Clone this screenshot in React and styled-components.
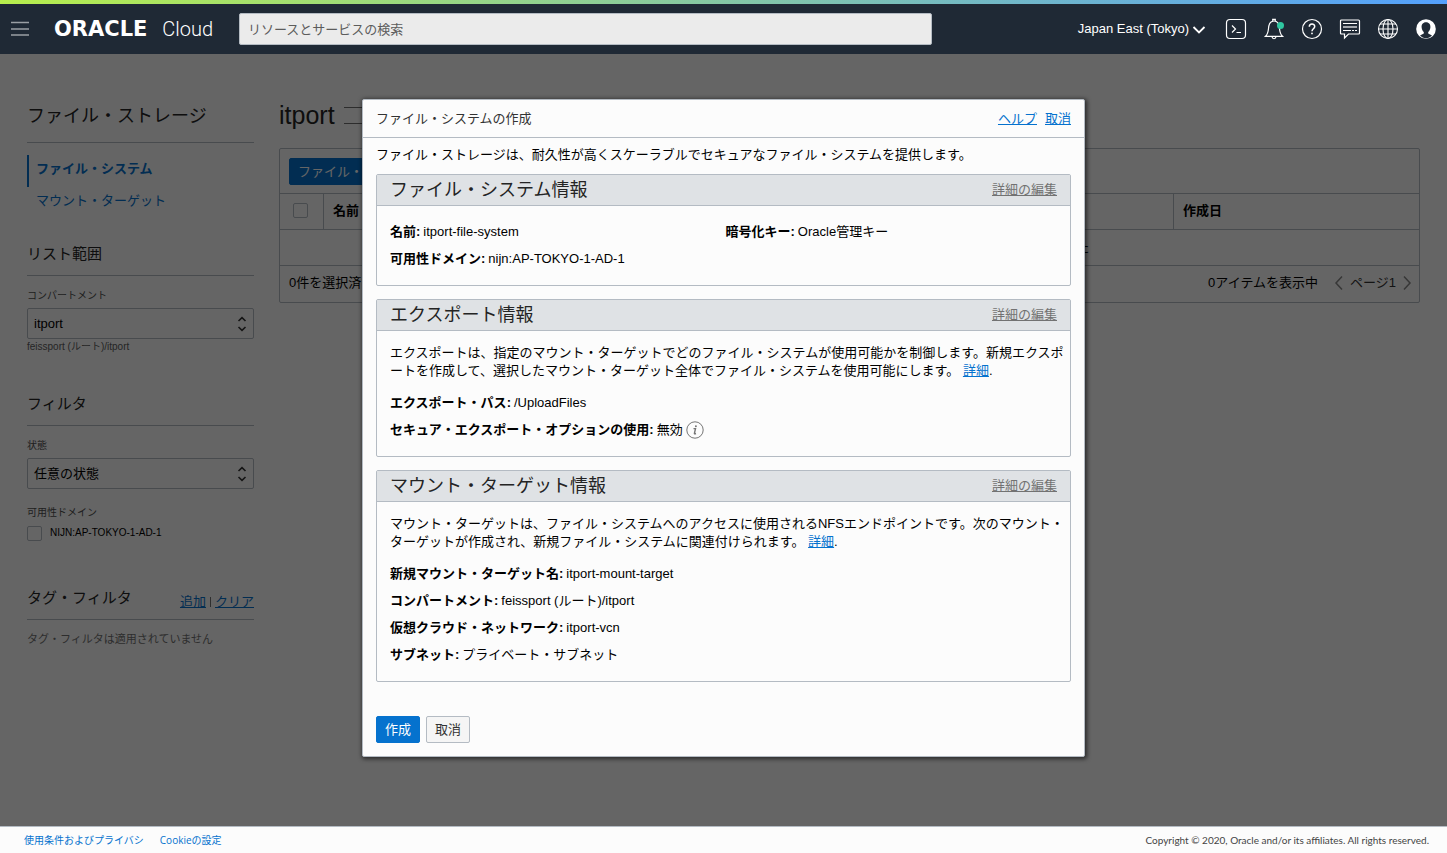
import React from 'react';
import styled, { createGlobalStyle, ThemeProvider } from 'styled-components';

const theme = {
  colors: {
    header: '#1f2935',
    page: '#fcfcfc',
    line: '#b4bbc3',
    link: '#0572ce',
    text: '#000000',
    heading: '#242424',
    muted: '#727272',
  },
};

const GlobalStyle = createGlobalStyle`
  *, *::before, *::after { box-sizing: border-box; }
  body {
    margin: 0;
    background: #fcfcfc;
    color: #000;
    font-family: "Liberation Sans", "Noto Sans CJK JP", sans-serif;
    font-size: 13px;
    line-height: 18px;
  }
  h1, h2, h3, p, dl, dd { margin: 0; }
  button, input, select { font: inherit; color: inherit; }
`;

const Page = styled.div`
  display: flex;
  flex-direction: column;
  min-height: 100vh;
`;

/* header */
const Rainbow = styled.div`
  height: 4px;
  background: linear-gradient(90deg, #b7ee4d, #53a0fd);
`;
const Header = styled.header`
  display: flex;
  align-items: center;
  height: 50px;
  padding: 0 10px;
  background: ${props => props.theme.colors.header};
  color: #fff;
`;
const IconButton = styled.button`
  display: flex;
  flex: none;
  padding: 0;
  border: 0;
  background: none;
  color: inherit;
`;
const Logo = styled.a`
  display: flex;
  align-items: center;
  justify-content: space-between;
  width: 159px;
  margin: 0 26px 0 24px;
  color: #fff;
  text-decoration: none;
  white-space: nowrap;
`;
const Oracle = styled.span`
  font: bold 21px/24px "DejaVu Sans", sans-serif;
`;
const Cloud = styled.span`
  font: 300 20px/24px Roboto, sans-serif;
`;
const Search = styled.input`
  flex: 0 1 693px;
  min-width: 100px;
  height: 32px;
  padding: 0 8px;
  border: 1px solid #b4bbc3;
  border-radius: 2px;
  background: #ebebeb;
  &::placeholder { color: #5c5c5c; opacity: 1; }
`;
const Tools = styled.div`
  display: flex;
  align-items: center;
  gap: 16px;
  margin-left: auto;
`;
const Region = styled(IconButton)`
  align-items: center;
  gap: 3px;
  margin-right: 3px;
  white-space: nowrap;
`;

/* page body behind the dialog */
const Body = styled.div`
  position: relative;
  flex: 1;
  display: flex;
  gap: 25px;
  padding: 48px 27px 40px;
`;
const Sidebar = styled.aside`
  flex: none;
  width: 227px;
`;
const SideTitle = styled.h2`
  height: 41px;
  padding-top: 2px;
  border-bottom: 1px solid ${props => props.theme.colors.line};
  color: ${props => props.theme.colors.heading};
  font-size: 18px;
  font-weight: normal;
  line-height: 24px;
`;
const SideNav = styled.nav`
  display: flex;
  flex-direction: column;
  margin-top: 12px;
`;
const SideLink = styled.a`
  height: 32px;
  padding-left: 7px;
  border-left: 2px solid ${props => (props.$active ? props.theme.colors.link : 'transparent')};
  color: ${props => props.theme.colors.link};
  font-weight: ${props => (props.$active ? 'bold' : 'normal')};
  line-height: 28px;
  text-decoration: none;
`;
const SectionHead = styled.div`
  display: flex;
  align-items: center;
  justify-content: space-between;
  height: 43px;
  margin-top: ${props => props.$top}px;
  border-bottom: 1px solid ${props => props.theme.colors.line};
`;
const SectionTitle = styled.h3`
  color: ${props => props.theme.colors.heading};
  font-size: 15px;
  font-weight: normal;
`;
const SectionLinks = styled.div`
  display: flex;
  gap: 4px;
  padding-top: 8px;
`;
const Divider = styled.span`
  width: 1px;
  height: 10px;
  margin-top: 4px;
  background: #777;
`;
const Link = styled.a`
  color: ${props => (props.$muted ? props.theme.colors.muted : props.theme.colors.link)};
  text-decoration: underline;
`;
const Label = styled.label`
  display: block;
  margin-top: 12px;
  color: #4f4f4f;
  font-size: 10px;
  line-height: 16px;
`;
const SelectBox = styled.div`
  position: relative;
  margin-top: 4px;
  svg { position: absolute; right: 6px; top: 8px; pointer-events: none; }
`;
const Select = styled.select`
  display: block;
  width: 100%;
  height: 31px;
  padding: 0 6px;
  appearance: none;
  border: 1px solid ${props => props.theme.colors.line};
  border-radius: 2px;
  background: transparent;
`;
const Hint = styled.p`
  color: #5c5c5c;
  font-size: 10px;
  line-height: 16px;
`;
const CheckGroup = styled.fieldset`
  margin: 16px 0 0;
  padding: 0;
  border: 0;
`;
const Legend = styled.legend`
  padding: 0;
  color: #4f4f4f;
  font-size: 10px;
  line-height: 16px;
`;
const CheckRow = styled.label`
  display: flex;
  align-items: center;
  gap: 8px;
  margin-top: 3px;
  font-size: 10px;
`;
const Checkbox = styled.input.attrs({ type: 'checkbox' })`
  display: block;
  flex: none;
  width: 15px;
  height: 15px;
  margin: 0;
  appearance: none;
  border: 1px solid ${props => props.theme.colors.line};
  border-radius: 2px;
`;
const Empty = styled.p`
  margin-top: 10px;
  color: ${props => props.theme.colors.muted};
  font-size: 11px;
`;

const Content = styled.main`
  flex: 1;
  min-width: 0;
`;
const TitleRow = styled.div`
  display: flex;
  align-items: center;
  gap: 9px;
  height: 26px;
`;
const PageTitle = styled.h1`
  color: ${props => props.theme.colors.heading};
  font-size: 25px;
  font-weight: normal;
`;
const Tag = styled.span`
  width: 96px;
  height: 17px;
  border: solid ${props => props.theme.colors.muted};
  border-width: 1px 0;
`;
const Panel = styled.section`
  margin-top: 20px;
  border: 1px solid ${props => props.theme.colors.line};
  border-radius: 2px;
`;
const Toolbar = styled.div`
  padding: 9px 9px 8px;
`;
const Button = styled.button`
  height: 27px;
  padding: 0 8px;
  border: 1px solid ${props => (props.$primary ? props.theme.colors.link : props.theme.colors.line)};
  border-radius: 2px;
  background: ${props => (props.$primary ? props.theme.colors.link : '#f5f5f5')};
  color: ${props => (props.$primary ? '#fff' : '#333')};
  line-height: 23px;
`;
const Table = styled.table`
  width: 100%;
  border-collapse: separate;
  border-spacing: 0;
  table-layout: fixed;
  th, td {
    height: 36px;
    padding: 0 9px;
    border-top: 1px solid ${props => props.theme.colors.line};
  }
  th { text-align: left; padding-bottom: 2px; }
  th + th { border-left: 1px solid ${props => props.theme.colors.line}; }
  th:first-child { padding-left: 13px; }
  td { text-align: center; white-space: nowrap; }
`;
const Th = styled.th`
  width: ${props => (props.$width ? `${props.$width}px` : 'auto')};
`;
const PanelFoot = styled.div`
  display: flex;
  align-items: center;
  justify-content: space-between;
  height: 37px;
  padding: 0 7px 2px 9px;
  border-top: 1px solid ${props => props.theme.colors.line};
`;
const Pager = styled.div`
  display: flex;
  align-items: center;
  gap: 7px;
  color: #333;
`;
const Count = styled.span`
  margin-right: 9px;
  color: #000;
`;

/* dialog */
const Overlay = styled.div`
  position: absolute;
  inset: 0;
  padding-top: 45px;
  background: rgba(0, 0, 0, 0.6);
`;
const Dialog = styled.div`
  width: 723px;
  max-width: 94%;
  margin: 0 auto;
  padding-bottom: 13px;
  border: 1px solid ${props => props.theme.colors.line};
  border-radius: 2px;
  background: #fcfcfc;
  box-shadow: 1px 1px 4px 1px rgba(0, 0, 0, 0.6);
`;
const DialogHead = styled.div`
  display: flex;
  align-items: center;
  justify-content: space-between;
  height: 38px;
  padding: 0 13px;
  border-bottom: 1px solid ${props => props.theme.colors.line};
`;
const DialogTitle = styled.h2`
  color: #333;
  font-size: 13px;
  font-weight: normal;
`;
const DialogLinks = styled.div`
  display: flex;
  gap: 8px;
`;
const DialogBody = styled.div`
  display: flex;
  flex-direction: column;
  gap: 13px;
  padding: 0 13px;
`;
const Intro = styled.p`
  margin: 8px 0 -3px;
`;
const Card = styled.section`
  padding-bottom: 13px;
  border: 1px solid ${props => props.theme.colors.line};
  border-radius: 2px;
`;
const CardHead = styled.div`
  display: flex;
  align-items: center;
  justify-content: space-between;
  height: 31px;
  padding: 0 13px;
  border-bottom: 1px solid ${props => props.theme.colors.line};
  background: #dfe2e5;
`;
const CardTitle = styled.h3`
  color: ${props => props.theme.colors.heading};
  font-size: 18px;
  font-weight: normal;
`;
const CardText = styled.p`
  margin: 13px 0 0 13px;
  white-space: nowrap;
  & + dl { margin-top: 9px; }
`;
const Fields = styled.dl`
  display: grid;
  grid-template-columns: ${props => (props.$split ? '1fr 1fr' : '1fr')};
  margin-top: 12px;
  padding: 0 9px 0 13px;
`;
const FieldRow = styled.div`
  display: flex;
  align-items: center;
  gap: 3px;
  height: 27px;
  dt { font-weight: bold; }
  dd { display: flex; align-items: center; gap: 3px; }
`;
const Actions = styled.div`
  display: flex;
  gap: 6px;
  margin-top: 34px;
  padding: 0 13px;
`;

const Footer = styled.footer`
  display: flex;
  align-items: center;
  gap: 16px;
  height: 27px;
  padding: 0 18px 0 24px;
  border-top: 1px solid ${props => props.theme.colors.line};
  background: #fcfcfc;
  color: #444;
  font: 10px/16px "Open Sans", "Noto Sans CJK JP", sans-serif;
  a { color: ${props => props.theme.colors.link}; text-decoration: none; }
  p { margin-left: auto; font-family: Lato, sans-serif; }
`;

const Icon = ({ children, size = 22, width = 1.2 }) => (
  <svg width={size} height={size} viewBox={`0 0 ${size} ${size}`} fill="none" stroke="currentColor" strokeWidth={width} aria-hidden="true">
    {children}
  </svg>
);

const MenuIcon = () => (
  <svg width="20" height="20" viewBox="0 0 20 20" stroke="#9a9fa4" strokeWidth="1.5" aria-hidden="true">
    <path d="M1 3.500h18M1 10h18M1 16h18" />
  </svg>
);

const SortArrows = () => (
  <svg width="12" height="16" viewBox="0 0 12 16" fill="none" stroke="#333" strokeWidth="1.6" aria-hidden="true">
    <path d="M2.500 5 6 1.700 9.500 5M2.500 11 6 14.300 9.500 11" />
  </svg>
);

const PageArrow = ({ d }) => (
  <svg width="9" height="16" viewBox="0 0 9 16" fill="none" stroke="#8a8a8a" strokeWidth="1.5" aria-hidden="true">
    <path d={d} />
  </svg>
);

const InfoIcon = () => (
  <svg width="18" height="18" viewBox="0 0 18 18" fill="none" stroke="#757575" aria-hidden="true">
    <circle cx="9" cy="9" r="8.2" />
    <path d="M7.5 7.6h2L8.4 12.4q-.1.7 1.6.1" strokeWidth="1.4" />
    <circle cx="9.9" cy="5.2" r="1" fill="#757575" stroke="none" />
  </svg>
);

const toolIcons = [
  {
    label: 'Cloud Shell',
    icon: (
      <Icon>
        <rect x="1.5" y="1.5" width="19" height="19" rx="3.5" />
        <path d="M7 7.500 10.500 11 7 14.500M11.500 14.500h4.500" />
      </Icon>
    ),
  },
  {
    label: 'お知らせ',
    icon: (
      <Icon>
        <path d="M2.500 18.300C4.500 16.500 5.200 14 5.500 10.500 5.800 6 7.500 3 11 3s5.200 3 5.500 7.500c.3 3.500 1 6 3 7.800ZM9.700 2.800V1.300h2.600v1.500M9 18.800c.3 2.600 3.700 2.600 4 0" />
        <circle cx="17.500" cy="7.500" r="3.500" fill="#2fc7a1" stroke="none" />
      </Icon>
    ),
  },
  {
    label: 'ヘルプ',
    icon: (
      <Icon>
        <circle cx="11" cy="11" r="9.500" />
        <path d="M8.300 8.800c0-3.800 5.400-3.600 5.400-.4 0 2.200-2.700 2.400-2.700 4.800" strokeWidth="1.5" />
        <circle cx="11" cy="15.400" r=".9" fill="currentColor" stroke="none" />
      </Icon>
    ),
  },
  {
    label: 'チャット',
    icon: (
      <Icon>
        <path d="M1.500 3q0-1 1-1h17q1 0 1 1v12q0 1-1 1H9.500L5.500 20v-4h-3q-1 0-1-1Z" />
        <path d="M4 5.500h14M4 12.500h8M13 12.500h2M16 12.500h2" strokeWidth="1" />
        <path d="M4 9h14" strokeWidth="2" stroke="#a4a8ad" />
      </Icon>
    ),
  },
  {
    label: '言語',
    icon: (
      <Icon width={1.1}>
        <circle cx="11" cy="11" r="9.500" />
        <ellipse cx="11" cy="11" rx="5" ry="9.500" />
        <path d="M11 1.500v19M1.500 11h19M3 6h16M3 16h16" />
      </Icon>
    ),
  },
  {
    label: 'プロファイル',
    icon: (
      <Icon>
        <circle cx="11" cy="11" r="9.800" fill="#fff" stroke="none" />
        <path d="M11 4.200c-3.200 0-4.600 2.400-4.400 5 .2 2.200 1 3.800 2.200 4.800v1.600L5 17.600c1.500 1.700 3.500 2.600 6 2.600s4.500-.9 6-2.600l-3.800-2V14c1.200-1 2-2.600 2.200-4.800.2-2.600-1.200-5-4.400-5Z" fill="#1f2935" stroke="none" />
      </Icon>
    ),
  },
];

const cards = [
  {
    title: 'ファイル・システム情報',
    split: true,
    fields: [
      ['名前', 'itport-file-system'],
      ['暗号化キー', 'Oracle管理キー'],
      ['可用性ドメイン', 'nijn:AP-TOKYO-1-AD-1'],
    ],
  },
  {
    title: 'エクスポート情報',
    text: [
      'エクスポートは、指定のマウント・ターゲットでどのファイル・システムが使用可能かを制御します。新規エクスポ',
      'ートを作成して、選択したマウント・ターゲット全体でファイル・システムを使用可能にします。',
    ],
    fields: [
      ['エクスポート・パス', '/UploadFiles'],
      ['セキュア・エクスポート・オプションの使用', '無効', true],
    ],
  },
  {
    title: 'マウント・ターゲット情報',
    text: [
      'マウント・ターゲットは、ファイル・システムへのアクセスに使用されるNFSエンドポイントです。次のマウント・',
      'ターゲットが作成され、新規ファイル・システムに関連付けられます。',
    ],
    fields: [
      ['新規マウント・ターゲット名', 'itport-mount-target'],
      ['コンパートメント', 'feissport (ルート)/itport'],
      ['仮想クラウド・ネットワーク', 'itport-vcn'],
      ['サブネット', 'プライベート・サブネット'],
    ],
  },
];

function TopBar() {
  return (
    <>
      <Rainbow />
      <Header>
        <IconButton aria-label="メニュー"><MenuIcon /></IconButton>
        <Logo href="#">
          <Oracle>ORACLE</Oracle>
          <Cloud>Cloud</Cloud>
        </Logo>
        <Search type="search" aria-label="検索" placeholder="リソースとサービスの検索" />
        <Tools>
          <Region>
            Japan East (Tokyo)
            <Icon size={14} width={1.8}><path d="M1.500 5 7 10.500 12.500 5" /></Icon>
          </Region>
          {toolIcons.map(item => (
            <IconButton key={item.label} aria-label={item.label}>{item.icon}</IconButton>
          ))}
        </Tools>
      </Header>
    </>
  );
}

function Filters() {
  return (
    <Sidebar>
      <SideTitle>ファイル・ストレージ</SideTitle>
      <SideNav>
        <SideLink href="#fs" $active>ファイル・システム</SideLink>
        <SideLink href="#mt">マウント・ターゲット</SideLink>
      </SideNav>

      <SectionHead $top={14}><SectionTitle>リスト範囲</SectionTitle></SectionHead>
      <Label htmlFor="compartment">コンパートメント</Label>
      <SelectBox>
        <Select id="compartment"><option>itport</option></Select>
        <SortArrows />
      </SelectBox>
      <Hint>feissport (ルート)/itport</Hint>

      <SectionHead $top={28}><SectionTitle>フィルタ</SectionTitle></SectionHead>
      <Label htmlFor="state">状態</Label>
      <SelectBox>
        <Select id="state"><option>任意の状態</option></Select>
        <SortArrows />
      </SelectBox>
      <CheckGroup>
        <Legend>可用性ドメイン</Legend>
        <CheckRow>
          <Checkbox />
          NIJN:AP-TOKYO-1-AD-1
        </CheckRow>
      </CheckGroup>

      <SectionHead $top={35}>
        <SectionTitle>タグ・フィルタ</SectionTitle>
        <SectionLinks>
          <Link href="#add">追加</Link>
          <Divider />
          <Link href="#clear">クリア</Link>
        </SectionLinks>
      </SectionHead>
      <Empty>タグ・フィルタは適用されていません</Empty>
    </Sidebar>
  );
}

function FileSystems() {
  return (
    <Content>
      <TitleRow>
        <PageTitle>itport</PageTitle>
        <Tag />
      </TitleRow>
      <Panel>
        <Toolbar>
          <Button $primary>ファイル・システムの作成</Button>
        </Toolbar>
        <Table>
          <thead>
            <tr>
              <Th $width={43}><Checkbox aria-label="すべて選択" /></Th>
              <Th>名前</Th>
              <Th $width={246}>作成日</Th>
            </tr>
          </thead>
          <tbody>
            <tr>
              <td colSpan={3}>選択されたコンパートメントの中にはファイル・システムが見つかりませんでした</td>
            </tr>
          </tbody>
        </Table>
        <PanelFoot>
          <span>0件を選択済</span>
          <Pager>
            <Count>0アイテムを表示中</Count>
            <IconButton aria-label="前のページ"><PageArrow d="M8 1.500 2 8l6 6.500" /></IconButton>
            ページ1
            <IconButton aria-label="次のページ"><PageArrow d="M1 1.500 7 8l-6 6.500" /></IconButton>
          </Pager>
        </PanelFoot>
      </Panel>
    </Content>
  );
}

function InfoCard({ title, text, fields, split }) {
  return (
    <Card>
      <CardHead>
        <CardTitle>{title}</CardTitle>
        <Link href="#edit" $muted>詳細の編集</Link>
      </CardHead>
      {text && (
        <CardText>
          {text[0]}
          <br />
          {text[1]} <Link href="#more">詳細</Link>.
        </CardText>
      )}
      <Fields $split={split}>
        {fields.map(([name, value, info]) => (
          <FieldRow key={name}>
            <dt>{name}:</dt>
            <dd>
              {value}
              {info && <InfoIcon />}
            </dd>
          </FieldRow>
        ))}
      </Fields>
    </Card>
  );
}

function CreateDialog() {
  return (
    <Overlay>
      <Dialog role="dialog" aria-labelledby="dialog-title">
        <DialogHead>
          <DialogTitle id="dialog-title">ファイル・システムの作成</DialogTitle>
          <DialogLinks>
            <Link href="#help">ヘルプ</Link>
            <Link href="#cancel">取消</Link>
          </DialogLinks>
        </DialogHead>
        <DialogBody>
          <Intro>ファイル・ストレージは、耐久性が高くスケーラブルでセキュアなファイル・システムを提供します。</Intro>
          {cards.map(card => <InfoCard key={card.title} {...card} />)}
        </DialogBody>
        <Actions>
          <Button $primary>作成</Button>
          <Button>取消</Button>
        </Actions>
      </Dialog>
    </Overlay>
  );
}

export default function App() {
  return (
    <ThemeProvider theme={theme}>
      <GlobalStyle />
      <Page>
        <TopBar />
        <Body>
          <Filters />
          <FileSystems />
          <CreateDialog />
        </Body>
        <Footer>
          <a href="#terms">使用条件およびプライバシ</a>
          <a href="#cookies">Cookieの設定</a>
          <p>Copyright © 2020, Oracle and/or its affiliates. All rights reserved.</p>
        </Footer>
      </Page>
    </ThemeProvider>
  );
}
